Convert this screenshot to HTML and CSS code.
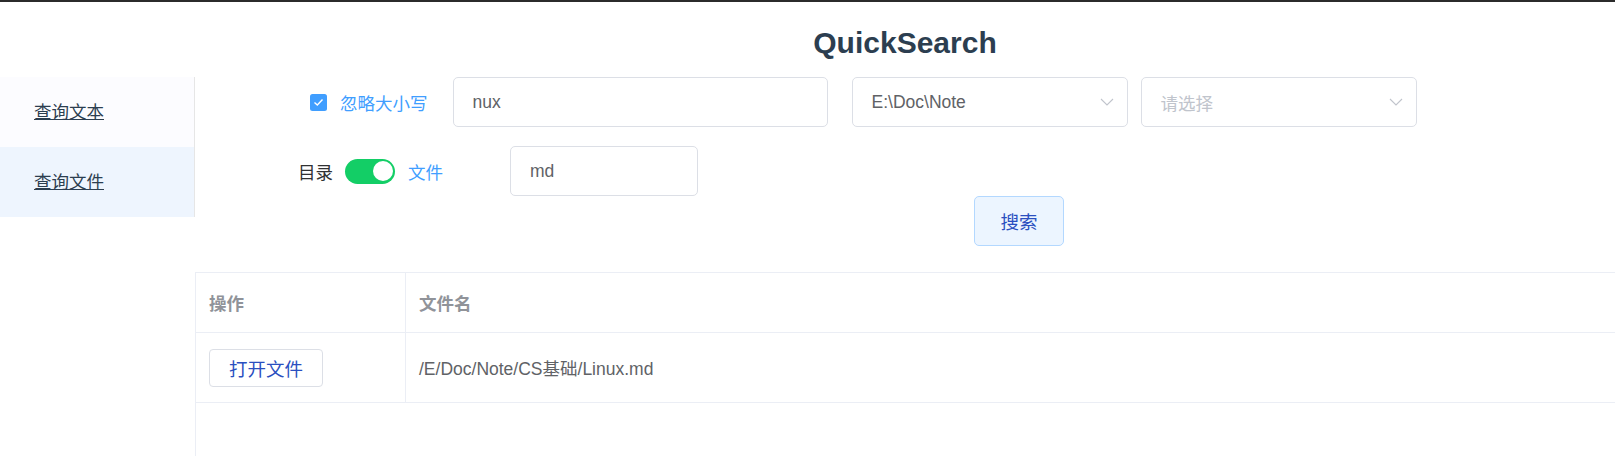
FILE: index.html
```html
<!DOCTYPE html>
<html lang="zh">
<head>
<meta charset="utf-8">
<title>QuickSearch</title>
<link rel="stylesheet" href="styles.css">
</head>
<body>
<div class="topbar"></div>
<div class="app">
  <aside class="aside">
    <ul class="menu">
      <li class="menu-item"><a href="#text">查询文本</a></li>
      <li class="menu-item active"><a href="#file">查询文件</a></li>
    </ul>
  </aside>
  <main class="main">
    <h1 class="title">QuickSearch</h1>
    <div class="form">
      <div class="row row1">
        <span class="checkbox"><svg width="11" height="9" viewBox="0 0 11 9"><polyline points="1.5,4.5 4.3,7 9.5,1.5" fill="none" stroke="#fff" stroke-width="1.4"/></svg></span>
        <span class="cb-label">忽略大小写</span>
        <div class="input input-kw">nux</div>
        <div class="input select select1"><span>E:\Doc\Note</span><svg class="arrow" width="14" height="8" viewBox="0 0 14 8"><polyline points="1,1 7,7 13,1" fill="none" stroke="#c0c4cc" stroke-width="1.1"/></svg></div>
        <div class="input select select2"><span class="placeholder">请选择</span><svg class="arrow" width="14" height="8" viewBox="0 0 14 8"><polyline points="1,1 7,7 13,1" fill="none" stroke="#c0c4cc" stroke-width="1.1"/></svg></div>
      </div>
      <div class="row row2">
        <span class="sw-label">目录</span>
        <span class="switch"><span class="knob"></span></span>
        <span class="sw-label on">文件</span>
        <div class="input input-ext">md</div>
      </div>
      <div class="row row3">
        <button class="btn btn-search">搜索</button>
      </div>
    </div>
    <div class="table">
      <div class="tr thead">
        <div class="cell c1">操作</div>
        <div class="cell c2">文件名</div>
      </div>
      <div class="tr tbody">
        <div class="cell c1"><button class="btn btn-open">打开文件</button></div>
        <div class="cell c2">/E/Doc/Note/CS基础/Linux.md</div>
      </div>
    </div>
  </main>
</div>
</body>
</html>
```

FILE: styles.css
```css
html, body {
  margin: 0;
  padding: 0;
  background: #fff;
}
body {
  font-family: "Liberation Sans", "Noto Sans CJK SC", sans-serif;
  font-size: 17.5px;
  overflow: hidden;
}
.topbar {
  height: 2px;
  background: #2b2b2b;
}
.app {
  display: flex;
}
.aside {
  width: 195px;
  flex: none;
  padding-top: 75px;
}
.menu {
  list-style: none;
  margin: 0;
  padding: 0;
  border-right: 1px solid #e6e6e6;
}
.menu-item {
  height: 70px;
  line-height: 70px;
  padding-left: 34px;
  font-size: 17.5px;
  background: #fcfcff;
}
.menu-item.active {
  background: #eef5fe;
}
.menu-item a {
  color: #2c3e50;
  text-decoration: underline;
}
.main {
  flex: 1;
  min-width: 0;
}
.title {
  margin: 0;
  height: 75px;
  box-sizing: border-box;
  padding-top: 24px;
  text-align: center;
  font-size: 30px;
  font-weight: bold;
  line-height: normal;
  color: #2c3e50;
}
.row {
  display: flex;
  align-items: center;
  height: 50px;
}
.row1 {
  padding-left: 115px;
}
.checkbox {
  width: 17px;
  height: 17px;
  border-radius: 2.5px;
  background: #409eff;
  display: flex;
  align-items: center;
  justify-content: center;
  flex: none;
}
.cb-label {
  margin-left: 13px;
  color: #409eff;
}
.input {
  height: 50px;
  box-sizing: border-box;
  border: 1px solid #dcdfe6;
  border-radius: 5px;
  padding: 0 19px;
  display: flex;
  align-items: center;
  color: #606266;
  flex: none;
}
.input-kw {
  width: 375px;
  margin-left: 25px;
}
.select {
  width: 276px;
  justify-content: space-between;
  padding-right: 13px;
}
.select1 {
  margin-left: 24px;
}
.select2 {
  margin-left: 13px;
}
.placeholder {
  color: #c0c4cc;
}
.row2 {
  margin-top: 19px;
  padding-left: 103px;
}
.sw-label {
  color: #303133;
}
.sw-label.on {
  color: #409eff;
}
.switch {
  width: 50px;
  height: 25px;
  box-sizing: border-box;
  border-radius: 12.5px;
  background: #13ce66;
  margin: 0 13px 0 12px;
  display: flex;
  align-items: center;
  justify-content: flex-end;
  padding: 0 2px;
  flex: none;
}
.knob {
  width: 20px;
  height: 20px;
  border-radius: 50%;
  background: #fff;
}
.input-ext {
  width: 188px;
  margin-left: 67px;
}
.row3 {
  padding-left: 779px;
}
.btn {
  font-family: inherit;
  font-size: 18.5px;
  box-sizing: border-box;
  border-radius: 5px;
  cursor: pointer;
  padding: 0;
}
.btn-search {
  width: 90px;
  height: 50px;
  background: #ecf5ff;
  border: 1px solid #b3d8ff;
  color: #2a4fc0;
}
.table {
  margin-top: 26px;
  border-top: 1px solid #ebeef5;
  border-left: 1px solid #ebeef5;
  min-height: 220px;
}
.tr {
  display: grid;
  grid-template-columns: 210px 1fr;
  border-bottom: 1px solid #ebeef5;
}
.thead {
  height: 60px;
  box-sizing: border-box;
}
.tbody {
  height: 70px;
  box-sizing: border-box;
}
.cell {
  display: flex;
  align-items: center;
  padding-left: 13px;
  box-sizing: border-box;
  color: #606266;
}
.c1 {
  border-right: 1px solid #ebeef5;
}
.thead .cell {
  color: #909399;
  font-weight: bold;
}
.btn-open {
  width: 114px;
  height: 38px;
  background: #fff;
  border: 1px solid #dcdfe6;
  border-radius: 4px;
  color: #2a4fc0;
}
```
